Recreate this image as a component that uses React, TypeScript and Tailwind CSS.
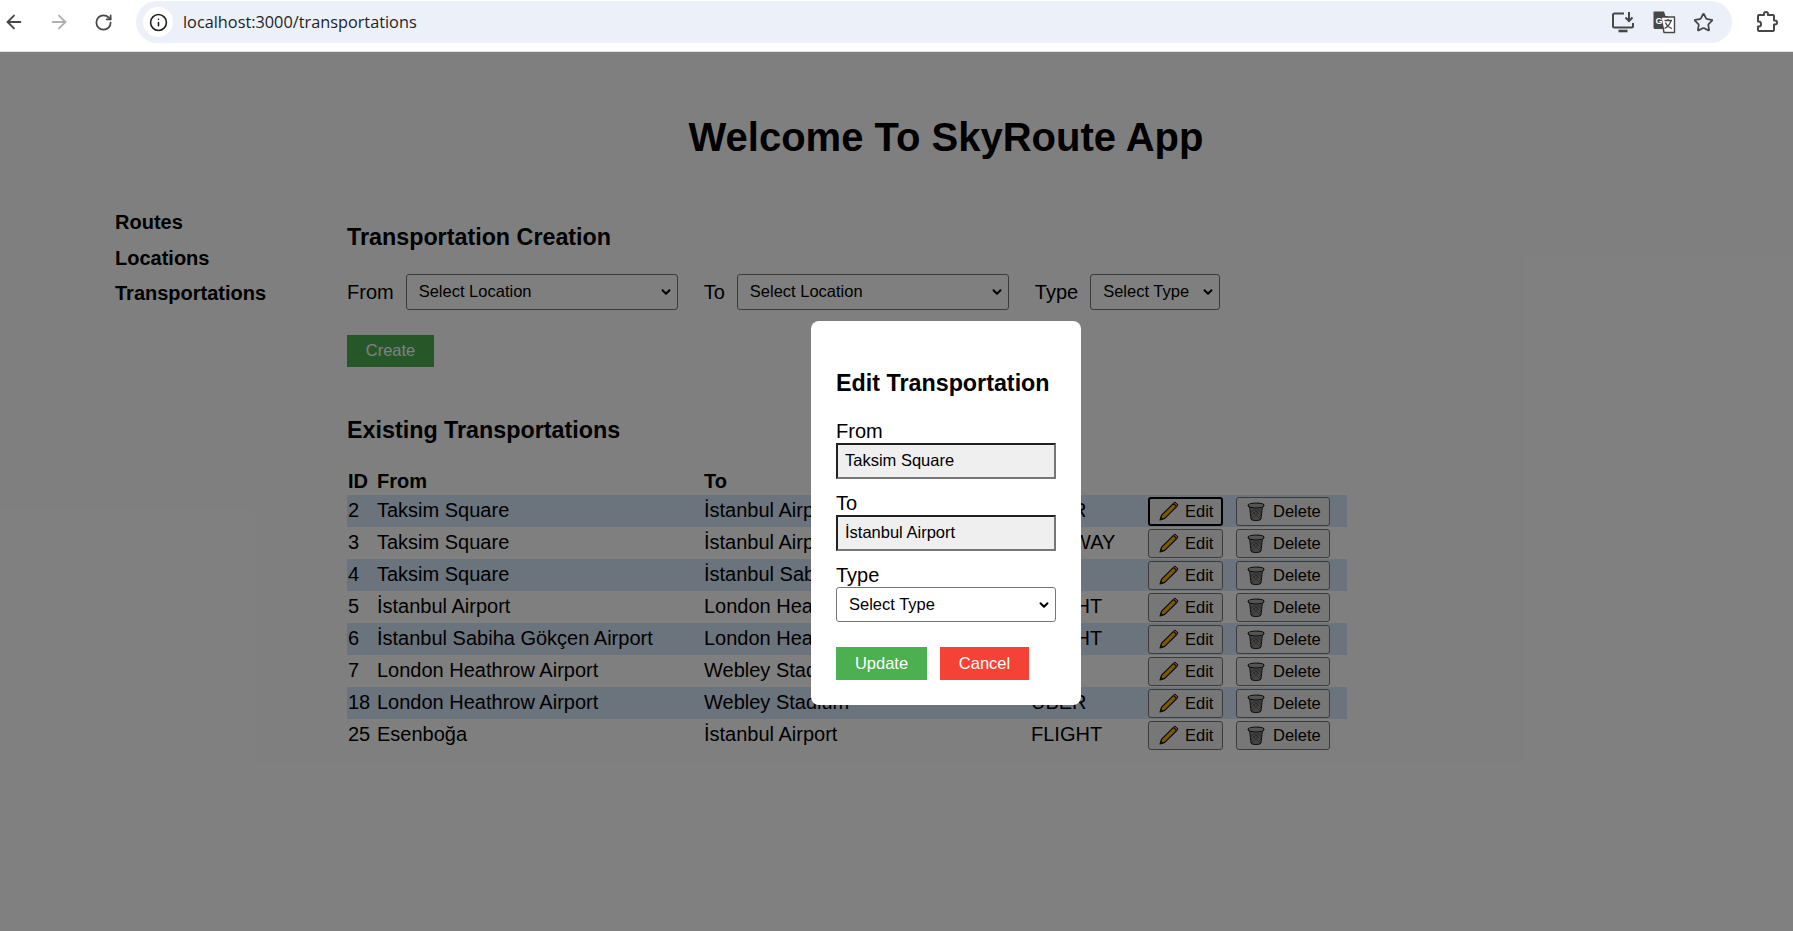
import React from 'react';
import { ArrowLeft, ArrowRight, RotateCw, Info, Star, ChevronDown } from 'lucide-react';

const rows = [
    { id: 2, from: 'Taksim Square', to: 'İstanbul Airport', type: 'UBER' },
    { id: 3, from: 'Taksim Square', to: 'İstanbul Airport', type: 'SUBWAY' },
    { id: 4, from: 'Taksim Square', to: 'İstanbul Sabiha Gökçen Airport', type: 'BUS' },
    { id: 5, from: 'İstanbul Airport', to: 'London Heathrow Airport', type: 'FLIGHT' },
    { id: 6, from: 'İstanbul Sabiha Gökçen Airport', to: 'London Heathrow Airport', type: 'FLIGHT' },
    { id: 7, from: 'London Heathrow Airport', to: 'Webley Stadium', type: 'BUS' },
    { id: 18, from: 'London Heathrow Airport', to: 'Webley Stadium', type: 'UBER' },
    { id: 25, from: 'Esenboğa', to: 'İstanbul Airport', type: 'FLIGHT' },
];

const PencilIcon = () => (
    <svg width="20" height="20" viewBox="0 0 19 19" className="shrink-0">
        <path d="M1 18 L2.5 13.5 L13.8 2.2 L16.8 5.2 L5.5 16.5 Z" fill="#f5b800" stroke="#111" strokeWidth="1.1" strokeLinejoin="round" />
        <path d="M13.8 2.2 L15.2 0.9 L18.1 3.8 L16.8 5.2 Z" fill="#e8788a" stroke="#111" strokeWidth="0.9" strokeLinejoin="round" />
        <path d="M1 18 L2 14.8 L4.2 17 Z" fill="#222" />
    </svg>
);

const TrashIcon = () => (
    <svg width="18" height="19" viewBox="0 0 18 19" className="shrink-0">
        <path d="M2.5 4 L4 17 Q4.2 18.5 9 18.5 Q13.8 18.5 14 17 L15.5 4 Z" fill="#8c8c8c" stroke="#1c1c1c" strokeWidth="1" />
        <ellipse cx="9" cy="3.5" rx="8" ry="2.5" fill="#a8a8a8" stroke="#1c1c1c" strokeWidth="1.2" />
        <path d="M4 8 L13 17 M7 7 L14 14 M10 7 L14.6 11 M14 7 L5 17 M11 7 L4 14 M8 7 L3.5 11" stroke="#444" strokeWidth="0.7" />
    </svg>
);

const TranslateIcon = () => (
    <svg width="24" height="24" viewBox="0 0 24 24">
        <path d="M1.5 1.5 H12 L13.5 6 H16 V19 H3 Q1.5 19 1.5 17.5 Z" fill="#474747" />
        <path d="M9 7 H22.5 V22.5 H12 Z" fill="#fff" stroke="#474747" strokeWidth="1.4" strokeLinejoin="round" />
        <text x="3.5" y="13.5" fontSize="9" fontWeight="700" fill="#fff" fontFamily="Liberation Sans, sans-serif">G</text>
        <path d="M12.5 10.5 H20 M16 9 V10.5 M19 10.5 C18 14 15.5 17 12.5 18.5 M13.5 12.5 C14.5 15 17 17.5 20 18.5" fill="none" stroke="#474747" strokeWidth="1.3" />
    </svg>
);

const InstallIcon = () => (
    <svg width="24" height="24" viewBox="0 0 24 24" fill="none" stroke="#474747" strokeWidth="2">
        <path d="M13 3.5 H3.5 Q2 3.5 2 5 V16 Q2 17.5 3.5 17.5 H20.5 Q22 17.5 22 16 V13" />
        <path d="M7.5 21 H16.5" strokeWidth="2.6" />
        <path d="M18 2 V10.5 M14.5 7.5 L18 11 L21.5 7.5" />
    </svg>
);

const ExtensionIcon = () => (
    <svg width="24" height="24" viewBox="0 0 24 24" fill="none" stroke="#474747" strokeWidth="2" strokeLinejoin="round">
        <path d="M4 5 H9 V4 Q9 2 11 2 Q13 2 13 4 V5 H18 Q19 5 19 6 V10.5 H20 Q22 10.5 22 12.5 Q22 14.5 20 14.5 H19 V20 Q19 21 18 21 H4 Q3 21 3 20 V16.5 H4 Q6 16.5 6 14.5 Q6 11.5 4 11.5 H3 V6 Q3 5 4 5 Z" />
    </svg>
);

const Select = ({ label, className }: { label: string; className: string }) => (
    <div className={`relative ${className}`}>
        <select className="block h-full w-full appearance-none rounded-[3px] border border-[#767676] bg-white pb-[1px] pl-[12px] text-[16.5px]">
            <option>{label}</option>
        </select>
        <ChevronDown size={14} strokeWidth={3.4} className="pointer-events-none absolute top-1/2 right-[5px] -translate-y-1/2" />
    </div>
);

const ActionButton = ({ focused, icon, label, className }: { focused?: boolean; icon: React.ReactNode; label: string; className: string }) => (
    <button className={`flex h-[29px] items-center rounded-[3px] text-[16.5px] text-black bg-[#efefef] ${focused ? 'border-2 border-black pl-[9px]' : 'border border-[#767676] pl-[10px]'} ${className}`}>
        {icon}
        <span>{label}</span>
    </button>
);

export default function App() {
    return (
        <div className="flex min-h-[931px] flex-col bg-white font-['Liberation_Sans',Arial,sans-serif] text-black">
            {/* browser toolbar */}
            <div className="flex h-[52px] items-start border-b border-[#e3e3e3] bg-white pt-[1px] pr-[14px]">
                <div className="flex h-[42px] w-[136px] items-center pl-[3px] text-[#474747]">
                    <ArrowLeft size={22} strokeWidth={2} />
                    <ArrowRight size={22} strokeWidth={2} className="ml-[23px] text-[#b0b0b0]" />
                    <RotateCw size={19} strokeWidth={2.2} className="ml-[24px]" />
                </div>
                <div className="flex h-[42px] flex-1 items-center rounded-full bg-[#ebf0f9] pr-[18px] pl-[7px]">
                    <div className="flex h-[30px] w-[30px] items-center justify-center rounded-full bg-white">
                        <Info size={19} strokeWidth={2} className="text-[#1f1f1f]" />
                    </div>
                    <span className="ml-[10px] font-['Open_Sans',sans-serif] text-[16.3px] text-[#1f1f1f]">localhost:3000/transportations</span>
                    <div className="ml-auto flex items-center gap-[17px] text-[#474747]">
                        <InstallIcon />
                        <TranslateIcon />
                        <Star size={21} strokeWidth={2} />
                    </div>
                </div>
                <div className="ml-[23px] flex h-[42px] items-center">
                    <ExtensionIcon />
                </div>
            </div>

            <div className="relative flex-1">
                <h1 className="pt-[62px] pl-[99px] text-center text-[40px] leading-[46px] font-bold">Welcome To SkyRoute App</h1>

                <div className="mt-[50px] flex">
                    <nav className="flex w-[347px] flex-col gap-[12.5px] pt-[1px] pl-[115px] text-[20px] leading-[23px] font-bold">
                        <a>Routes</a>
                        <a>Locations</a>
                        <a>Transportations</a>
                    </nav>

                    <main className="w-[1000px] pt-[13px]">
                        <h2 className="text-[23.3px] leading-[28px] font-bold">Transportation Creation</h2>

                        <div className="mt-[23px] flex items-center text-[20px]">
                            <label>From</label>
                            <Select label="Select Location" className="ml-[12px] h-[36px] w-[272px]" />
                            <label className="ml-[26px]">To</label>
                            <Select label="Select Location" className="ml-[12px] h-[36px] w-[272px]" />
                            <label className="ml-[26px]">Type</label>
                            <Select label="Select Type" className="ml-[12px] h-[36px] w-[130px]" />
                        </div>

                        <button className="mt-[25px] h-[32px] w-[87px] bg-[#4caf50] pb-[2px] text-[16.5px] text-white">Create</button>

                        <h2 className="mt-[49px] text-[23.3px] leading-[28px] font-bold">Existing Transportations</h2>

                        <table className="mt-[23px] w-[1000px] table-fixed border-collapse text-[20px] leading-[23px]">
                            <thead>
                                <tr className="h-[28px] text-left font-bold">
                                    <th className="w-[30px] pl-[1px]">ID</th>
                                    <th className="w-[327px]">From</th>
                                    <th className="w-[327px]">To</th>
                                    <th className="w-[117px]">Type</th>
                                    <th></th>
                                </tr>
                            </thead>
                            <tbody>
                                {rows.map((row, index) => (
                                    <tr key={row.id} className={`h-[32px] ${index % 2 === 0 ? 'bg-[#d6e6fa]' : ''}`}>
                                        <td className="pb-[2px] pl-[1px]">{row.id}</td>
                                        <td className="pb-[2px]">{row.from}</td>
                                        <td className="pb-[2px]">{row.to}</td>
                                        <td className="pb-[2px]">{row.type}</td>
                                        <td>
                                            <div className="flex items-center gap-[13px]">
                                                <ActionButton focused={index === 0} icon={<PencilIcon />} label="Edit" className="w-[75px] gap-[6px]" />
                                                <ActionButton icon={<TrashIcon />} label="Delete" className="w-[94px] gap-[8px]" />
                                            </div>
                                        </td>
                                    </tr>
                                ))}
                            </tbody>
                        </table>
                    </main>
                </div>

                {/* modal overlay */}
                <div className="absolute inset-0 flex items-start justify-center bg-black/50 pt-[269px] pl-[99px]">
                    <div className="w-[270px] rounded-[8px] bg-white px-[25px] pt-[48px] pb-[25px]">
                        <h2 className="text-[23.3px] leading-[28px] font-bold">Edit Transportation</h2>

                        <label className="mt-[23px] block text-[20px] leading-[23px]">From</label>
                        <input readOnly value="Taksim Square" className="block h-[36px] w-[220px] border-2 border-t-[#212121] border-r-[#767676] border-b-[#767676] border-l-[#212121] bg-[#efefef] pb-[2px] pl-[7px] text-[16.5px]" />

                        <label className="mt-[13px] block text-[20px] leading-[23px]">To</label>
                        <input readOnly value="İstanbul Airport" className="block h-[36px] w-[220px] border-2 border-t-[#212121] border-r-[#767676] border-b-[#767676] border-l-[#212121] bg-[#efefef] pb-[2px] pl-[7px] text-[16.5px]" />

                        <label className="mt-[13px] block text-[20px] leading-[23px]">Type</label>
                        <Select label="Select Type" className="h-[35px] w-[220px]" />

                        <div className="mt-[25px] flex gap-[13px]">
                            <button className="h-[33px] w-[91px] bg-[#4caf50] text-[16.5px] text-white">Update</button>
                            <button className="h-[33px] w-[89px] bg-[#f44336] text-[16.5px] text-white">Cancel</button>
                        </div>
                    </div>
                </div>
            </div>
        </div>
    );
}
